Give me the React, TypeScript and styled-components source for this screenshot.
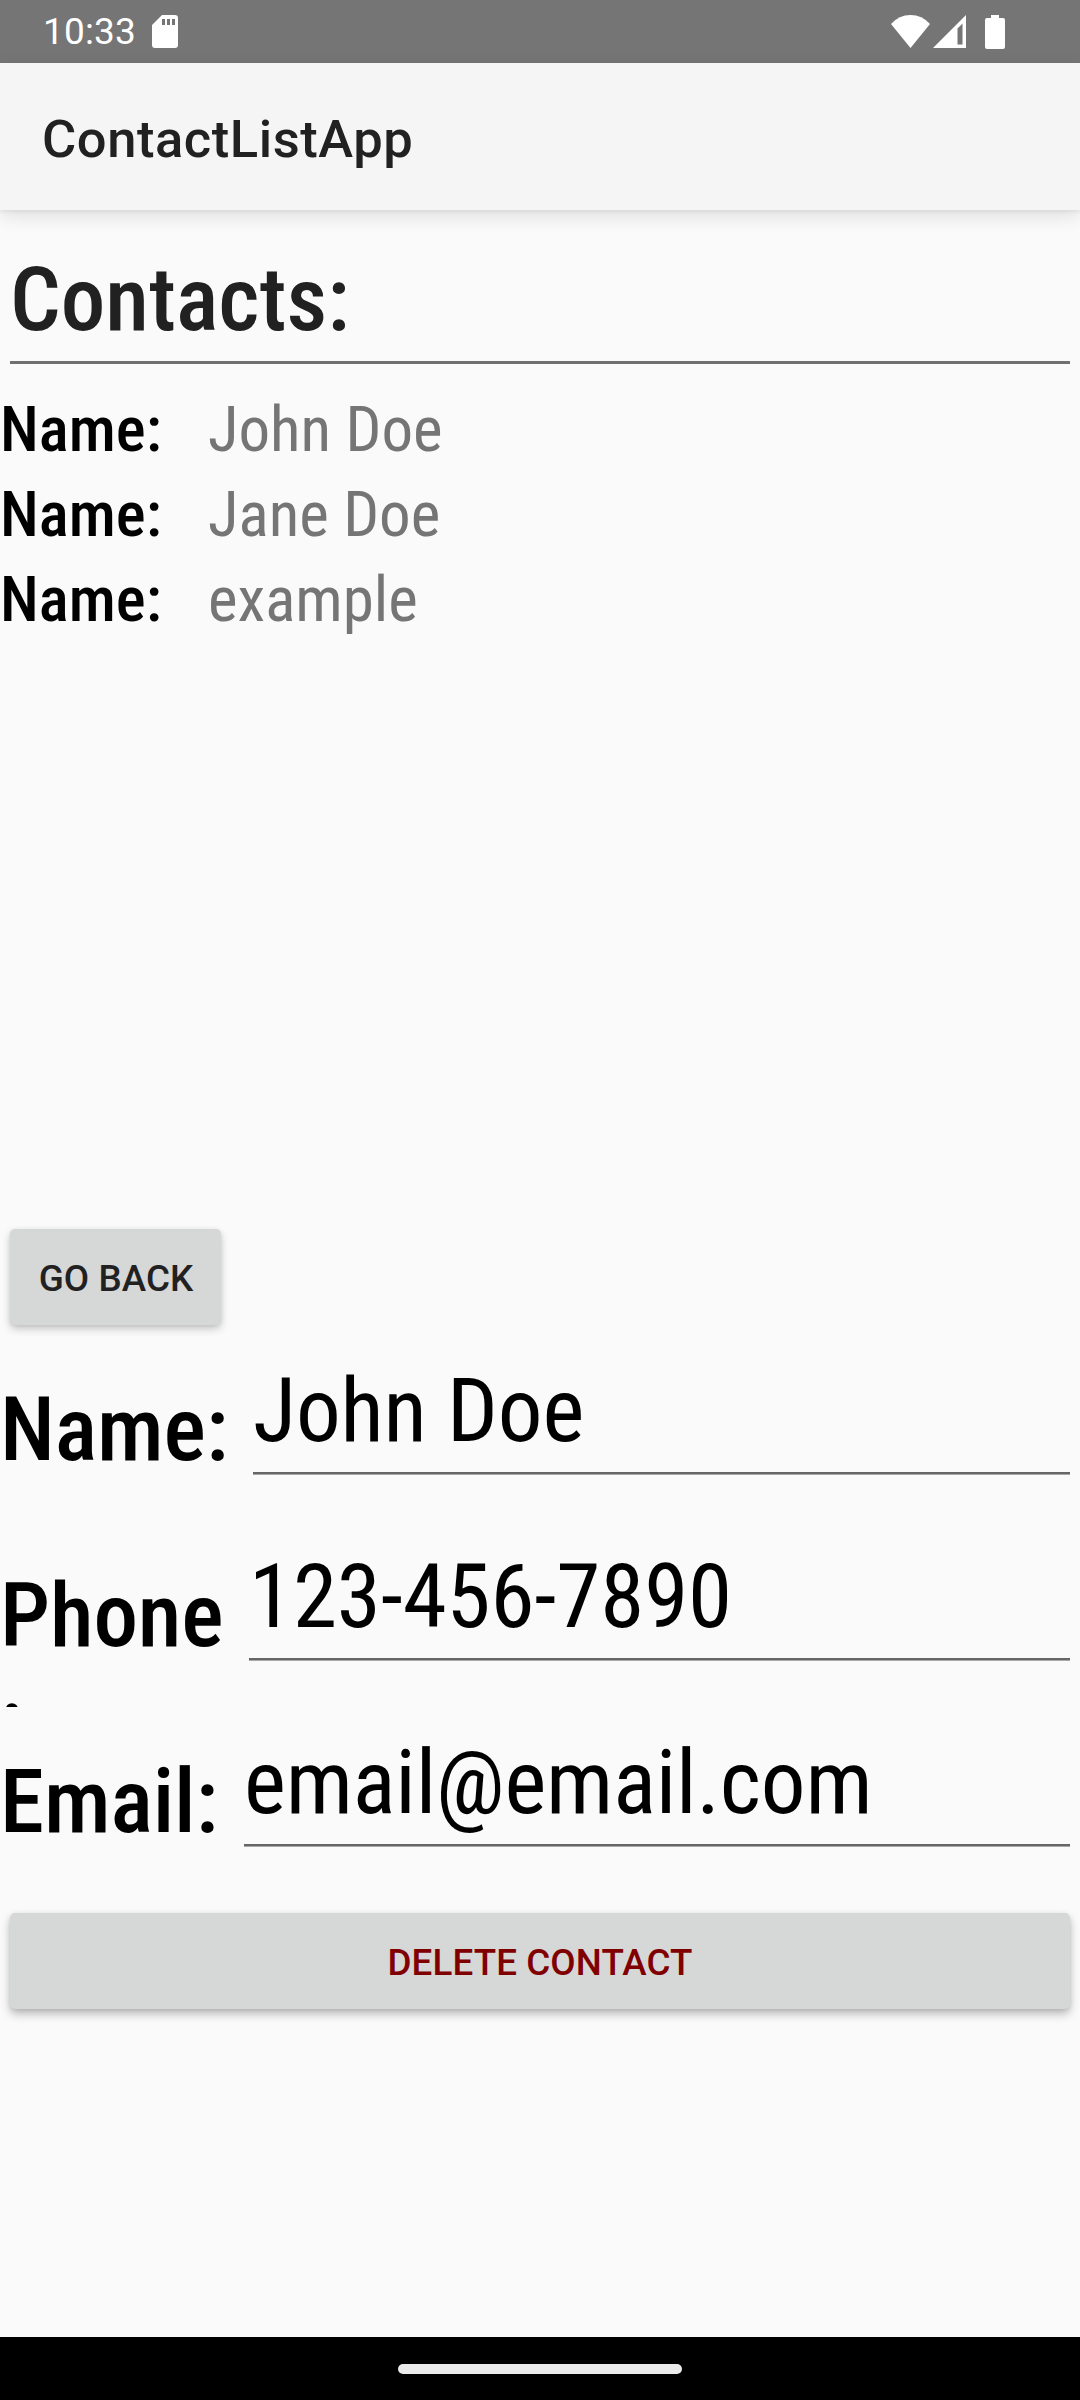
import React from 'react';
import styled, { createGlobalStyle } from 'styled-components';

const GlobalStyle = createGlobalStyle`
  *, *::before, *::after { box-sizing: border-box; }
  body { margin: 0; background: #fafafa; }
`;

const condensed = "'Roboto Condensed', Roboto, sans-serif";

const Screen = styled.div`
  display: flex;
  flex-direction: column;
  width: 1080px;
  height: 2400px;
  overflow: hidden;
  background: #fafafa;
  font-family: Roboto, sans-serif;
  color: #000;
`;

const StatusBar = styled.header`
  display: flex;
  align-items: center;
  height: 63px;
  padding: 0 75px 0 43px;
  background: #757575;
  color: #fff;
`;

const Clock = styled.span`
  width: 109px;
  font-size: 37px;
  line-height: 44px;
  letter-spacing: 0.15px;
  white-space: nowrap;
`;

const StatusIcons = styled.div`
  display: flex;
  align-items: center;
  margin-left: auto;
`;

const Glyph = styled.svg<{ $gap?: number }>`
  display: block;
  flex: none;
  margin-left: ${(p) => p.$gap ?? 0}px;
  fill: #fff;
`;

const AppBar = styled.div`
  display: flex;
  align-items: center;
  flex: none;
  height: 147px;
  padding: 4px 42px 0;
  background: #f5f5f5;
  box-shadow: 0 2px 3px rgba(0, 0, 0, 0.05), 0 6px 18px rgba(0, 0, 0, 0.11);
`;

const Title = styled.h1`
  margin: 0;
  font-size: 52.5px;
  font-weight: 500;
  line-height: 62px;
  letter-spacing: 0.55px;
  color: #212121;
`;

const Heading = styled.h2`
  margin: 37px 10px 0;
  height: 117px;
  border-bottom: 3px solid #6f6f6f;
  font-family: ${condensed};
  font-size: 89.25px;
  font-weight: 500;
  line-height: 105px;
  color: #212121;
`;

const ContactList = styled.ul`
  flex: none;
  height: 835px;
  margin: 0;
  padding: 23px 0 0;
  list-style: none;
`;

const ContactItem = styled.li`
  display: grid;
  grid-template-columns: 208px 1fr;
  height: 85px;
  font-family: ${condensed};
  font-size: 63px;
  line-height: 85px;
`;

const ItemLabel = styled.span`
  font-weight: 500;
`;

const ItemValue = styled.span`
  color: #757575;
`;

const Button = styled.button<{ $wide?: boolean }>`
  display: block;
  flex: none;
  width: ${(p) => (p.$wide ? '1060px' : '211px')};
  height: 96px;
  margin: ${(p) => (p.$wide ? '20px' : '30px')} 10px 0;
  padding: ${(p) => (p.$wide ? '3px 0 0' : '3px 0 0 1px')};
  border: 0;
  border-radius: 5px;
  background: #d6d7d7;
  box-shadow: ${(p) =>
    p.$wide
      ? '0 5px 10px rgba(0, 0, 0, 0.26), 0 1px 4px rgba(0, 0, 0, 0.08)'
      : '0 4px 8px rgba(0, 0, 0, 0.2), 0 1px 4px rgba(0, 0, 0, 0.08)'};
  font-family: Roboto, sans-serif;
  font-size: 36.75px;
  font-weight: 500;
  line-height: 44px;
  letter-spacing: 0.1px;
  text-align: center;
  text-transform: uppercase;
  color: ${(p) => (p.$wide ? '#800000' : '#212121')};
`;

const Form = styled.section`
  flex: none;
  padding-top: 10px;
  font-family: ${condensed};
  font-size: 89.25px;
  line-height: 105px;
  letter-spacing: -0.16px;
`;

const FieldRow = styled.div`
  display: flex;
  height: 186px;
  overflow: hidden;
`;

const FieldLabel = styled.label<{ $width: number }>`
  flex: none;
  width: ${(p) => p.$width}px;
  padding-top: 42px;
  font-weight: 500;
  overflow-wrap: anywhere;
`;

const FieldValue = styled.div`
  flex: 1;
  height: 116px;
  margin: 23px 10px 0;
  border-bottom: 2px solid #666;
  box-shadow: 0 1px 0 #a8a8a8;
  white-space: nowrap;
`;

const NavBar = styled.footer`
  display: flex;
  align-items: center;
  justify-content: center;
  height: 63px;
  margin-top: auto;
  background: #000;
`;

const HomePill = styled.div`
  width: 284px;
  height: 10px;
  margin-bottom: -1px;
  border-radius: 5px;
  background: #ebebeb;
`;

const contacts = ['John Doe', 'Jane Doe', 'example'];

const fields = [
  { label: 'Name:', value: 'John Doe', width: 243 },
  { label: 'Phone:', value: '123-456-7890', width: 239 },
  { label: 'Email:', value: 'email@email.com', width: 234 },
];

export default function App() {
  return (
    <Screen>
      <GlobalStyle />
      <StatusBar>
        <Clock>10:33</Clock>
        <Glyph width="26" height="33" viewBox="0 0 26 33">
          <path
            fillRule="evenodd"
            d="M10 0H23A3 3 0 0 1 26 3V30A3 3 0 0 1 23 33H3A3 3 0 0 1 0 30V10ZM10 4V10H13V4ZM15 4V10H18V4ZM20 4V10H23V4Z"
          />
        </Glyph>
        <StatusIcons>
          <Glyph width="39" height="33" viewBox="0 0 39 33">
            <path d="M19.5 33L0 9Q8 0 19.5 0T39 9Z" />
          </Glyph>
          <Glyph $gap={3} width="33" height="33" viewBox="0 0 33 33">
            <path fillRule="evenodd" d="M33 0V33H0ZM29.500 8.500L24.500 13.500V29.500H29.500Z" />
          </Glyph>
          <Glyph $gap={19} width="20" height="34" viewBox="0 0 20 34">
            <path d="M6 0H14V3H18A2 2 0 0 1 20 5V32A2 2 0 0 1 18 34H2A2 2 0 0 1 0 32V5A2 2 0 0 1 2 3H6Z" />
          </Glyph>
        </StatusIcons>
      </StatusBar>
      <AppBar>
        <Title>ContactListApp</Title>
      </AppBar>
      <Heading>Contacts:</Heading>
      <ContactList>
        {contacts.map((name) => (
          <ContactItem key={name}>
            <ItemLabel>Name:</ItemLabel>
            <ItemValue>{name}</ItemValue>
          </ContactItem>
        ))}
      </ContactList>
      <Button>Go back</Button>
      <Form>
        {fields.map((field) => (
          <FieldRow key={field.label}>
            <FieldLabel $width={field.width}>{field.label}</FieldLabel>
            <FieldValue>{field.value}</FieldValue>
          </FieldRow>
        ))}
      </Form>
      <Button $wide>Delete contact</Button>
      <NavBar>
        <HomePill />
      </NavBar>
    </Screen>
  );
}
